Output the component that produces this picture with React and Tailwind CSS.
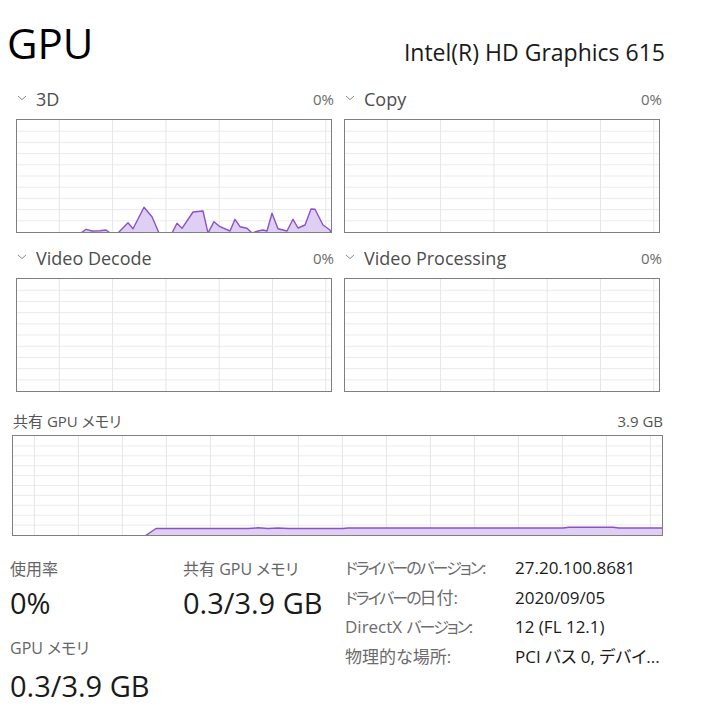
import React from 'react';

// 3D engine samples, in chart-inner coords (314 x 112); 113 sits just under the frame
const PTS_3D = [
  [0, 113], [64, 113], [69, 109.3], [75, 111], [83, 110.7], [89, 110], [93, 113],
  [101, 113], [111, 102.7], [116, 108.7], [127, 87.3], [135, 96.7], [142, 113],
  [155, 113], [160, 103.3], [165, 108.3], [176, 92], [186, 91], [191, 113], [197, 101.7],
  [203, 106.7], [213, 111], [218, 99.3], [223, 106.7], [230, 108.3], [235, 113],
  [241, 111], [246, 110], [250, 111], [255, 93.3], [261, 108.7], [270, 111], [276, 99.3],
  [281, 108], [288, 105], [294, 89], [298, 89.3], [306, 105], [313, 110], [314, 113],
];

const PTS_MEM = [
  [0, 100], [132, 100], [143, 92.5], [235, 92.5], [245, 91.8], [255, 92.5], [265, 92],
  [275, 92.5], [330, 92.5], [335, 92], [550, 92], [556, 91.2], [600, 91.2], [606, 92], [649, 92],
];

function Chart({ w, h, vStart, vStep, rows, pts }) {
  const vlines = [];
  for (let x = vStart; x < w; x += vStep) vlines.push(x);
  const hlines = [];
  for (let i = 1; i < rows; i++) hlines.push((h / rows) * i);
  const line = pts ? pts.map(p => p.join(',')).join(' ') : '';
  const area = pts ? `0,${h} ${line} ${w},${h}` : '';

  return (
    <div className="border border-[#7f7f7f] bg-white" style={{ width: w + 2, height: h + 2 }}>
      <svg width={w} height={h} className="block">
        {hlines.map(y => <line key={'h' + y} x1="0" x2={w} y1={y} y2={y} stroke="#ebebeb" strokeWidth="1" />)}
        {vlines.map(x => <line key={'v' + x} x1={x} x2={x} y1="0" y2={h} stroke="#e6e6e6" strokeWidth="1" />)}
        {pts && <polygon points={area} fill="#e0cff5" />}
        {pts && <polyline points={line} fill="none" stroke="#8a52c6" strokeWidth="1.4" strokeLinejoin="round" />}
      </svg>
    </div>
  );
}

function Chevron() {
  return (
    <svg width="10" height="6" viewBox="0 0 10 6" className="mt-[5px] ml-[1px] shrink-0">
      <path d="M1 1 L5 4.6 L9 1" fill="none" stroke="#8a8a8a" strokeWidth="1" />
    </svg>
  );
}

function Engine({ name, pts }) {
  return (
    <div className="w-[318px]">
      <div className="flex items-start h-[18px]">
        <Chevron />
        <span className="ml-[9px] text-[18px] leading-[18px] text-[#4d4d4d]">{name}</span>
        <span className="ml-auto text-[15px] leading-[18px] text-[#6b6b6b]">0%</span>
      </div>
      <div className="mt-[11px]">
        <Chart w={314} h={112} vStart={42.3} vStep={53.3} rows={10} pts={pts} />
      </div>
    </div>
  );
}

// narrow kana run, closer to the UI font's proportional katakana
const K = ({ children }) => <span className="text-[16px] tracking-[-2px]">{children}</span>;

const DETAILS = [
  [<><K>ドライバーのバージョン</K>:</>, '27.20.100.8681'],
  [<><K>ドライバーの</K>日付:</>, '2020/09/05'],
  [<>DirectX <K>バージョン</K>:</>, '12 (FL 12.1)'],
  [<>物理的な場所:</>, 'PCI バス 0, デバイ...'],
];

export default function App() {
  return (
    <div className="w-[701px] h-[708px] bg-white overflow-hidden text-[#1a1a1a] font-['Open_Sans','Noto_Sans_CJK_JP',sans-serif] [font-feature-settings:'palt']">
      {/* header */}
      <div className="flex items-baseline justify-between pt-[21px] pl-[7px] pr-[36px]">
        <span className="text-[42px] leading-[44px] text-black">GPU</span>
        <span className="text-[23px] leading-[22px] text-[#1a1a1a] relative top-[2px]">Intel(R) HD Graphics 615</span>
      </div>

      {/* engines */}
      <div className="mt-[25px] ml-[16px] grid grid-cols-[318px_318px] gap-x-[10px] gap-y-[16px]">
        <Engine name="3D" pts={PTS_3D} />
        <Engine name="Copy" />
        <Engine name="Video Decode" />
        <Engine name="Video Processing" />
      </div>

      {/* shared memory */}
      <div className="mt-[22px] ml-[12px] w-[651px]">
        <div className="flex items-start h-[15px] pl-[1px] text-[15px] leading-[15px] text-[#555]">
          <span>共有 GPU メモリ</span>
          <span className="ml-auto">3.9 GB</span>
        </div>
        <div className="mt-[6px]">
          <Chart w={649} h={99} vStart={21.4} vStep={44} rows={10} pts={PTS_MEM} />
        </div>
      </div>

      {/* stats */}
      <div className="flex mt-[17px] pl-[10px]">
        <div className="w-[335px] pt-[8px] grid grid-cols-[173px_162px]">
          <div className="flex flex-col">
            <span className="text-[16px] leading-[16px] text-[#666]">使用率</span>
            <span className="mt-[11px] text-[29px] leading-[29px]">0%</span>
            <span className="mt-[23px] text-[16px] leading-[16px] text-[#666]">GPU メモリ</span>
            <span className="mt-[15px] text-[29px] leading-[29px]">0.3/3.9 GB</span>
          </div>
          <div className="flex flex-col">
            <span className="text-[16px] leading-[16px] text-[#666]">共有 GPU メモリ</span>
            <span className="mt-[11px] text-[29px] leading-[29px]">0.3/3.9 GB</span>
          </div>
        </div>
        <div className="grid grid-cols-[170px_150px] auto-rows-[29.5px] text-[17px] leading-[29.5px]">
          {DETAILS.map(([k, v], i) => (
            <React.Fragment key={i}>
              <span className="h-[29.5px] text-[#6b6b6b] whitespace-nowrap">{k}</span>
              <span className="h-[29.5px] whitespace-nowrap">{v}</span>
            </React.Fragment>
          ))}
        </div>
      </div>
    </div>
  );
}
